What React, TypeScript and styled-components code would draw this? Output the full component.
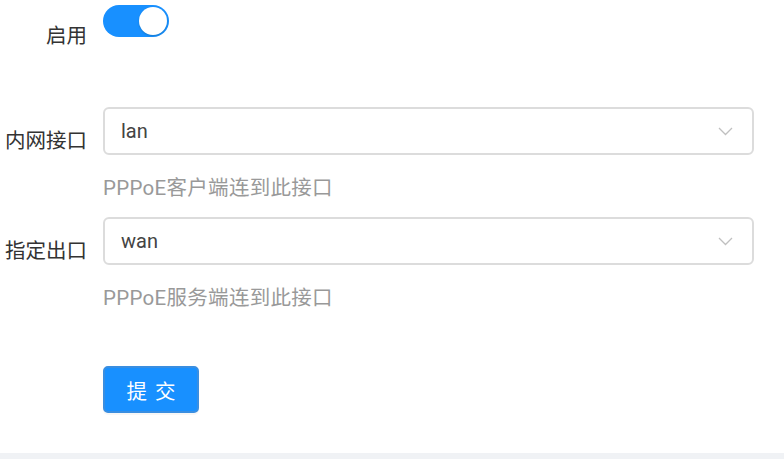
import React from "react";
import styled, { createGlobalStyle } from "styled-components";

const Global = createGlobalStyle`
  html, body { margin: 0; padding: 0; background: #f0f2f5; }
  body { font-family: Roboto, "Noto Sans CJK SC", "Noto Sans", sans-serif; }
  * { box-sizing: border-box; }
`;

const Page = styled.div`
  width: 784px;
  height: 459px;
  display: flex;
  flex-direction: column;
`;

const Panel = styled.div`
  height: 453px;
  background: #fff;
  padding: 2px 30px 0 0;
`;

const Item = styled.div<{ $mb: number }>`
  display: grid;
  grid-template-columns: 87px 1fr;
  column-gap: 16px;
  margin-bottom: ${(p) => p.$mb}px;
`;

const Label = styled.label`
  text-align: right;
  padding-top: 8px;
  line-height: 48px;
  font-size: 20.5px;
  color: #333;
  font-family: "Noto Sans CJK SC", sans-serif;
  white-space: nowrap;
`;

const Control = styled.div`
  display: flex;
  flex-direction: column;
  align-items: flex-start;
`;

const Switch = styled.button<{ $on: boolean }>`
  margin-top: 3px;
  width: 66px;
  height: 32px;
  border: none;
  border-radius: 16px;
  background: ${(p) => (p.$on ? "#1890ff" : "#bfbfbf")};
  padding: 2px;
  display: flex;
  justify-content: ${(p) => (p.$on ? "flex-end" : "flex-start")};
  cursor: pointer;
`;

const Knob = styled.span`
  width: 28px;
  height: 28px;
  border-radius: 50%;
  background: #fff;
  box-shadow: 0 1px 2px rgba(0, 35, 11, 0.2);
`;

const Select = styled.div`
  width: 100%;
  height: 48px;
  border: 2px solid #dcdcdc;
  border-radius: 6px;
  display: flex;
  align-items: center;
  justify-content: space-between;
  padding: 0 19px 0 16px;
  font-size: 20px;
  color: #444;
`;

const Help = styled.div`
  margin-top: 19px;
  line-height: 28px;
  font-size: 20.5px;
  letter-spacing: 0.3px;
  color: #999;
`;

const Submit = styled.button`
  width: 96px;
  height: 47px;
  background: #1890ff;
  border: 2px solid #3a8ee0;
  border-radius: 5px;
  color: #fff;
  font-size: 20.5px;
  letter-spacing: 8px;
  padding: 0 0 0 8px;
  font-family: "Noto Sans CJK SC", sans-serif;
  box-shadow: 0 2px 0 rgba(0, 0, 0, 0.03);
  cursor: pointer;
`;

const Footer = styled.div`
  height: 6px;
  background: #f0f2f5;
`;

const Chevron = () => (
  <svg width="15" height="9" viewBox="0 0 15 9" fill="none">
    <path d="M1 1l6.5 6.5L14 1" stroke="#c0c0c0" strokeWidth="1.3" />
  </svg>
);

export default function App() {
  return (
    <Page>
      <Global />
      <Panel>
        <Item $mb={49}>
          <Label>启用</Label>
          <Control>
            <Switch $on={true} aria-label="启用">
              <Knob />
            </Switch>
          </Control>
        </Item>
        <Item $mb={15}>
          <Label>内网接口</Label>
          <Control>
            <Select>
              <span>lan</span>
              <Chevron />
            </Select>
            <Help>PPPoE客户端连到此接口</Help>
          </Control>
        </Item>
        <Item $mb={54}>
          <Label>指定出口</Label>
          <Control>
            <Select>
              <span>wan</span>
              <Chevron />
            </Select>
            <Help>PPPoE服务端连到此接口</Help>
          </Control>
        </Item>
        <Item $mb={0}>
          <span />
          <Control>
            <Submit>提交</Submit>
          </Control>
        </Item>
      </Panel>
      <Footer />
    </Page>
  );
}
